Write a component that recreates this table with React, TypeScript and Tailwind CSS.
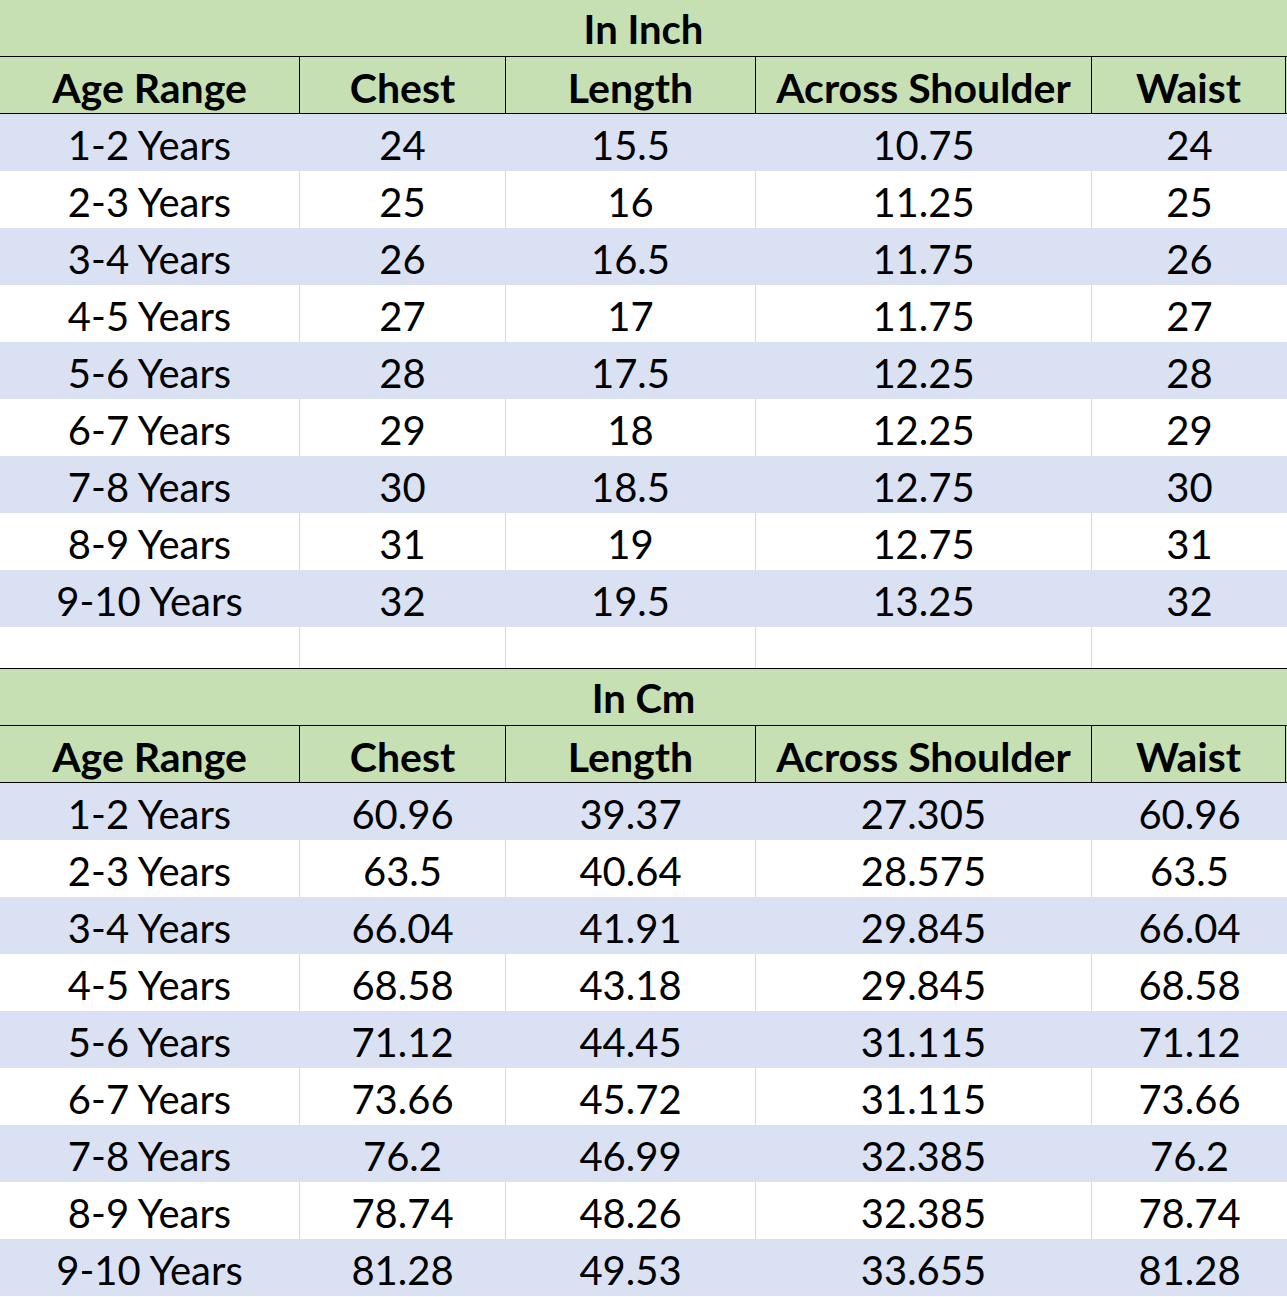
import React from "react";

const GRID = "grid grid-cols-[299px_206px_250px_336px_196px]";
const headers = ["Age Range", "Chest", "Length", "Across Shoulder", "Waist"];
const ages = ["1-2 Years", "2-3 Years", "3-4 Years", "4-5 Years", "5-6 Years", "6-7 Years", "7-8 Years", "8-9 Years", "9-10 Years"];

const inch: string[][] = [
  ["24", "15.5", "10.75", "24"],
  ["25", "16", "11.25", "25"],
  ["26", "16.5", "11.75", "26"],
  ["27", "17", "11.75", "27"],
  ["28", "17.5", "12.25", "28"],
  ["29", "18", "12.25", "29"],
  ["30", "18.5", "12.75", "30"],
  ["31", "19", "12.75", "31"],
  ["32", "19.5", "13.25", "32"],
];

const cm: string[][] = [
  ["60.96", "39.37", "27.305", "60.96"],
  ["63.5", "40.64", "28.575", "63.5"],
  ["66.04", "41.91", "29.845", "66.04"],
  ["68.58", "43.18", "29.845", "68.58"],
  ["71.12", "44.45", "31.115", "71.12"],
  ["73.66", "45.72", "31.115", "73.66"],
  ["76.2", "46.99", "32.385", "76.2"],
  ["78.74", "48.26", "32.385", "78.74"],
  ["81.28", "49.53", "33.655", "81.28"],
];

function Section({ title, rows }: { title: string; rows: string[][] }) {
  return (
    <div>
      <div className="h-[57px] bg-[#c6e0b4] border-b border-black flex items-center justify-center pt-[2px] font-bold text-[40px] leading-none">
        {title}
      </div>
      <div className={`${GRID} h-[57px] bg-[#c6e0b4] border-b border-black`}>
        {headers.map((h, i) => (
          <div
            key={h}
            className={`flex items-center justify-center pt-[4px] font-bold text-[41px] leading-none ${i > 0 ? "border-l border-black" : ""} ${i === 4 ? "border-r border-black mr-[1px]" : ""}`}
          >
            {h}
          </div>
        ))}
      </div>
      {rows.map((r, ri) => {
        const blue = ri % 2 === 0;
        const cells = [ages[ri], ...r];
        return (
          <div key={ri} className={`${GRID} h-[57px] ${blue ? "bg-[#d9e1f2]" : "bg-white"}`}>
            {cells.map((c, i) => (
              <div
                key={i}
                className={`flex items-center justify-center pt-[4px] text-[40px] leading-none ${i > 0 ? (blue ? "border-l border-[#d9e1f2]" : "border-l border-[#d9d9d9]") : ""}`}
              >
                {c}
              </div>
            ))}
          </div>
        );
      })}
    </div>
  );
}

export default function App() {
  return (
    <div className="w-[1287px] bg-white text-black [font-family:Lato,sans-serif]">
      <Section title="In Inch" rows={inch} />
      <div className={`${GRID} h-[42px] bg-white border-b border-black`}>
        {headers.map((h, i) => (
          <div key={h} className={i > 0 ? "border-l border-[#d9d9d9]" : ""} />
        ))}
      </div>
      <Section title="In Cm" rows={cm} />
    </div>
  );
}
